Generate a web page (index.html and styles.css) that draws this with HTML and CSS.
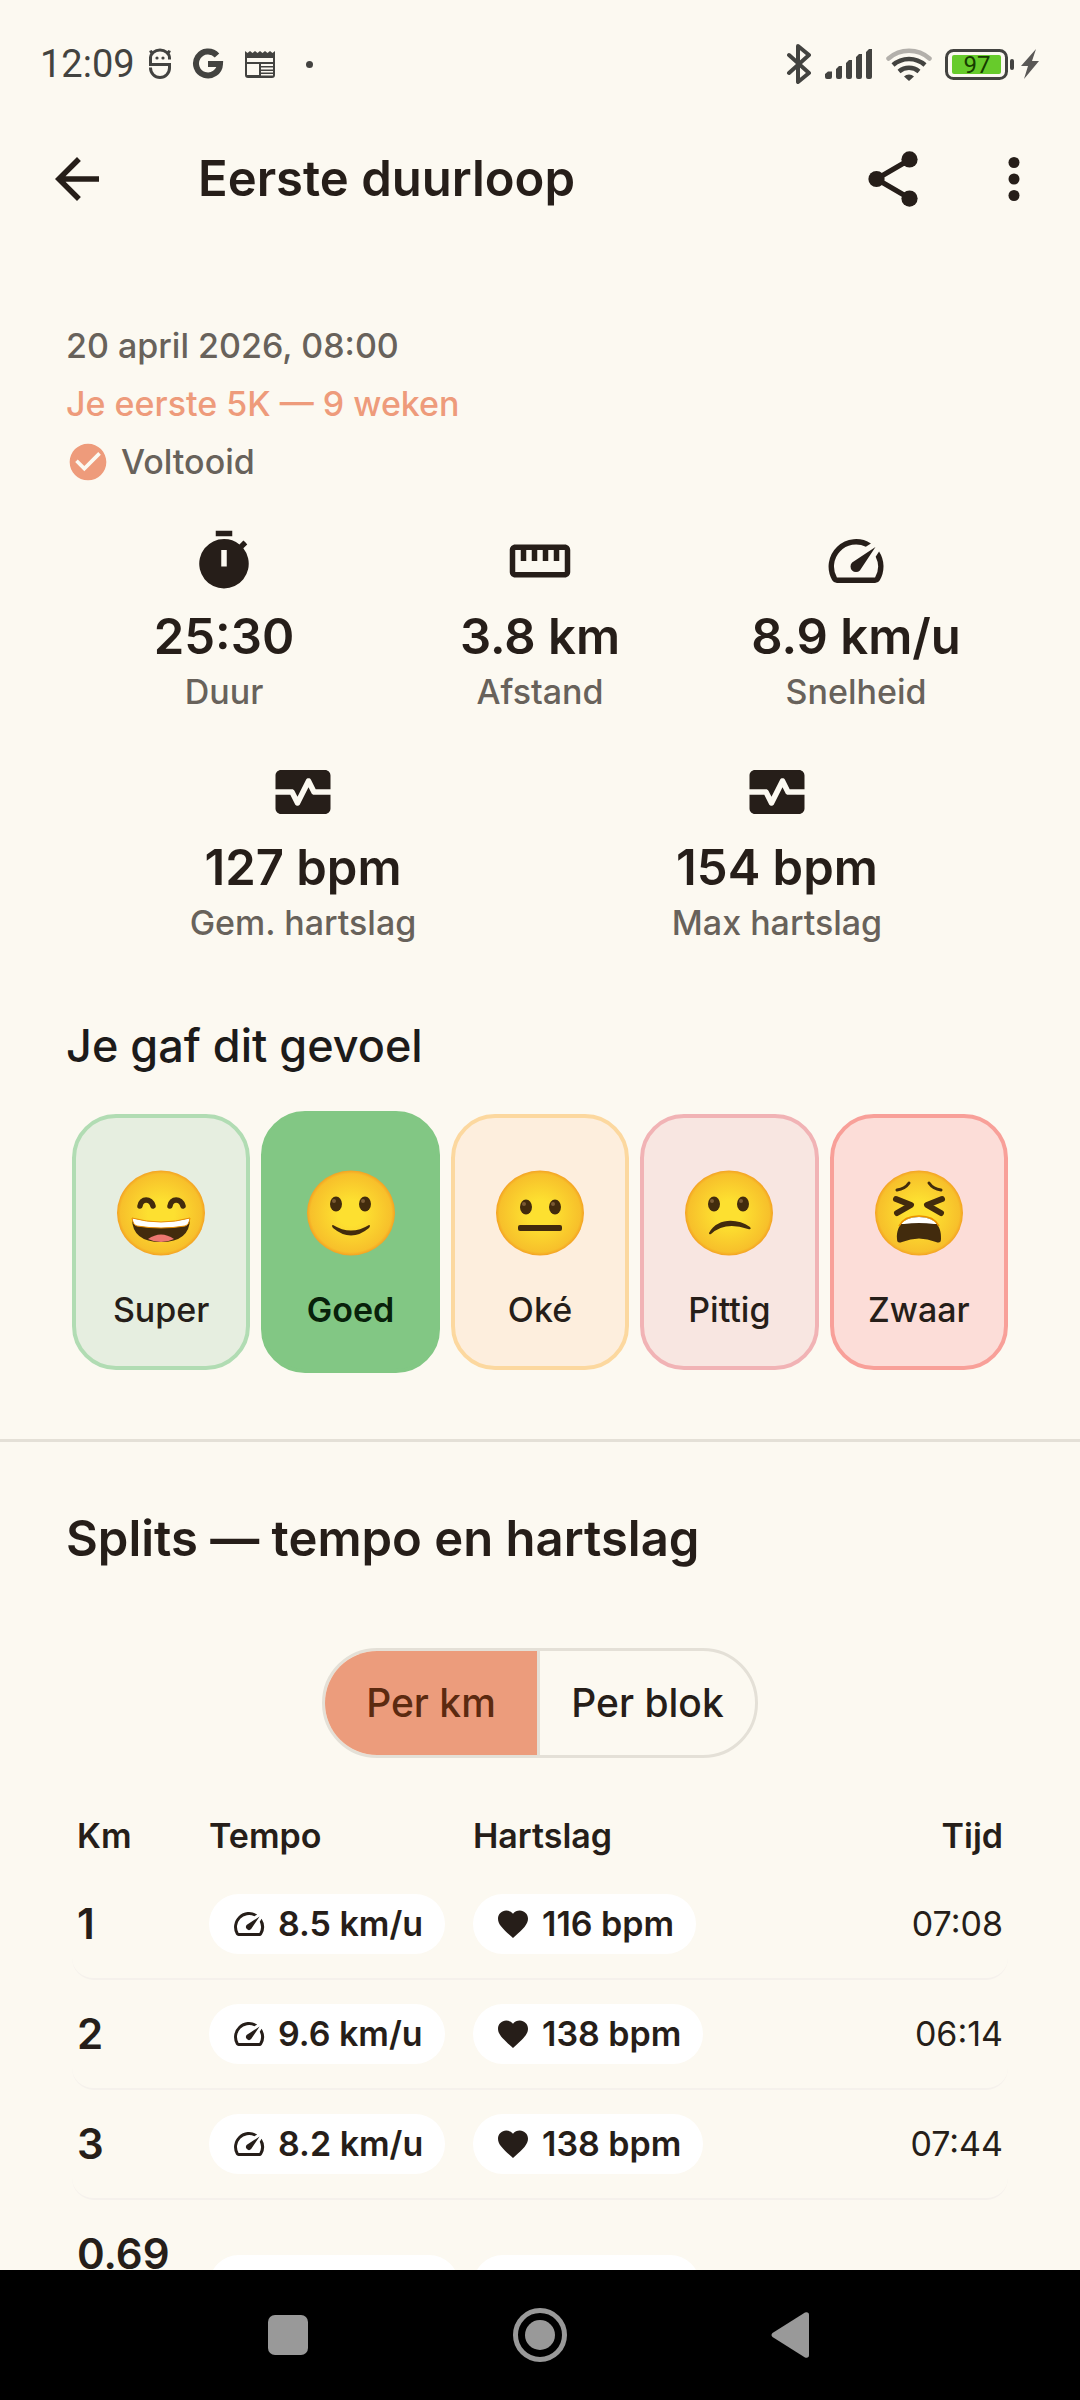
FILE: index.html
```html
<!DOCTYPE html>
<html lang="nl">
<head>
<meta charset="utf-8">
<meta name="viewport" content="width=device-width, initial-scale=1">
<title>Eerste duurloop</title>
<link rel="stylesheet" href="styles.css">
</head>
<body>
<svg class="defs" aria-hidden="true">
  <defs>
    <radialGradient id="face" cx="0.5" cy="0.5" r="0.5">
      <stop offset="0.3" stop-color="#fde030"/>
      <stop offset="0.92" stop-color="#f7c02b"/>
      <stop offset="1" stop-color="#f4a223"/>
    </radialGradient>
    <symbol id="gauge" viewBox="0 0 24 24">
      <path d="M20.38 8.57l-1.23 1.85a8 8 0 0 1-.22 7.58H5.07A8 8 0 0 1 15.58 6.85l1.85-1.23A10 10 0 0 0 3.35 19a2 2 0 0 0 1.72 1h13.85a2 2 0 0 0 1.74-1 10 10 0 0 0-.27-10.44z"/>
      <path d="M10.59 15.41a2 2 0 0 0 2.83 0l5.66-8.49-8.49 5.66a2 2 0 0 0 0 2.83z"/>
    </symbol>
    <symbol id="heart" viewBox="0 0 24 24">
      <path d="M12 21.35l-1.45-1.32C5.4 15.36 2 12.28 2 8.5 2 5.42 4.42 3 7.5 3c1.74 0 3.41.81 4.5 2.09C13.09 3.81 14.76 3 16.5 3 19.58 3 22 5.42 22 8.5c0 3.78-3.4 6.86-8.55 11.54z"/>
    </symbol>
    <symbol id="monitor" viewBox="0 0 24 24">
      <path d="M15.11 12.45 14 10.24l-3.11 6.21c-.16.34-.51.55-.89.55s-.73-.21-.89-.55L7.38 13H2v5c0 1.100.9 2 2 2h16c1.100 0 2-.9 2-2v-5h-6c-.38 0-.73-.21-.89-.55z"/>
      <path d="M20 4H4c-1.100 0-2 .9-2 2v5h6c.38 0 .73.210.89.550L10 13.760l3.110-6.210c.340-.680 1.450-.680 1.790 0L16.620 11H22V6c0-1.100-.9-2-2-2z"/>
    </symbol>
  </defs>
</svg>

<div class="status-bar">
  <div class="status-left">
    <span class="clock">12:09</span>
    <div class="notifications">
      <svg width="24" height="32" viewBox="0 0 24 32" fill="none" stroke="#434340" stroke-width="3">
        <path d="M2.500 11.500V10a9.500 8 0 0 1 19 0v1.500M2.500 9v7.500h19V20a9.500 9.500 0 0 1-19 0v-.5M4 6L2.500 2.500M20 6l1.500-3.500"/>
        <circle cx="9" cy="10" r="1.600" fill="#434340" stroke="none"/>
        <circle cx="15" cy="10" r="1.600" fill="#434340" stroke="none"/>
      </svg>
      <svg width="32" height="32" viewBox="0 0 32 32" fill="none" stroke="#434340" stroke-width="6">
        <path d="M25 7.500A12 12 0 1 0 28 16H16"/>
      </svg>
      <svg width="32" height="32" viewBox="0 0 32 32" fill="#434340">
        <path fill-rule="evenodd" d="M1 3l2.500 2L6 3l2.500 2L11 3l2.500 2L16 3l2.500 2L21 3l2.500 2L26 3l2.500 2L31 3v24a3 3 0 0 1-3 3H4a3 3 0 0 1-3-3zM3 10v4h26v-4zM3 16v11h12V16zM17 16v2h12v-2zM17 19.500v2h12v-2zM17 23v1.500h12V23zM17 26v1.500h12V26z"/>
      </svg>
      <span class="status-dot"></span>
    </div>
  </div>
  <div class="status-right">
    <svg width="26" height="40" viewBox="0 0 26 40" fill="none" stroke="#434340" stroke-width="4" stroke-linecap="round" stroke-linejoin="round">
      <path d="M3 11l20 18-11 9V2l11 9L3 29"/>
    </svg>
    <svg width="48" height="32" viewBox="0 0 48 32" fill="#434340">
      <path d="M0 26l3-2.500h4V29a2 2 0 0 1-2 2H2a2 2 0 0 1-2-2zM11 21l3-3h3v11a2 2 0 0 1-2 2h-2a2 2 0 0 1-2-2zM21 15l3-3h3v17a2 2 0 0 1-2 2h-2a2 2 0 0 1-2-2zM31 9l3-3h3v23a2 2 0 0 1-2 2h-2a2 2 0 0 1-2-2zM41 4l3-3h3v28a2 2 0 0 1-2 2h-2a2 2 0 0 1-2-2z"/>
    </svg>
    <svg width="46" height="36" viewBox="0 0 46 36" fill="none" stroke="#434340" stroke-width="4.500">
      <path stroke="#b3b0ab" stroke-linecap="round" d="M2.500 12.500a31 31 0 0 1 41 0"/>
      <path d="M7 19a24 24 0 0 1 32 0M13 25.500a15.500 15.500 0 0 1 20 0"/>
      <path stroke="none" fill="#434340" d="M18 30.500a7 7 0 0 1 10 0L23 35z"/>
    </svg>
    <div class="power">
      <svg width="70" height="32" viewBox="0 0 70 32">
        <rect x="1.500" y="2.500" width="60" height="28" rx="7" fill="none" stroke="#434340" stroke-width="3"/>
        <rect x="7" y="7" width="49" height="19" rx="2" fill="#67cb2b"/>
        <rect x="65" y="11" width="4" height="11" rx="2" fill="#434340"/>
        <text class="battery-text" x="32" y="25" text-anchor="middle">97</text>
      </svg>
      <svg width="20" height="32" viewBox="0 0 20 32" fill="#5a5856"><path d="M16 1L1 18h7L4 31l15-18h-7z"/></svg>
    </div>
  </div>
</div>

<header class="app-bar">
  <button class="icon-button" type="button" aria-label="Terug">
    <svg class="icon" viewBox="0 0 24 24"><path d="M20 11H7.830l5.590-5.590L12 4l-8 8 8 8 1.410-1.410L7.830 13H20z"/></svg>
  </button>
  <h1 class="title">Eerste duurloop</h1>
  <button class="icon-button" type="button" aria-label="Delen">
    <svg class="icon" viewBox="0 0 24 24"><path d="M18 5L6 12l12 7" fill="none" stroke="#261e19" stroke-width="1.900"/><circle cx="18" cy="4.900" r="2.950"/><circle cx="6" cy="12" r="2.950"/><circle cx="18" cy="19.100" r="2.950"/></svg>
  </button>
  <button class="icon-button" type="button" aria-label="Meer">
    <svg class="icon" viewBox="0 0 24 24"><circle cx="12" cy="6" r="2"/><circle cx="12" cy="12" r="2"/><circle cx="12" cy="18" r="2"/></svg>
  </button>
</header>

<main class="content">
  <section class="summary">
    <div class="meta">
      <p class="muted">20 april 2026, 08:00</p>
      <p class="plan">Je eerste 5K — 9 weken</p>
      <p class="muted done">
        <svg class="done-icon" viewBox="0 0 24 24"><path d="M12 2C6.480 2 2 6.480 2 12s4.480 10 10 10 10-4.480 10-10S17.520 2 12 2zm-2 15l-5-5 1.410-1.410L10 14.170l7.590-7.590L19 8l-9 9z"/></svg>
        Voltooid
      </p>
    </div>

    <div class="stats">
      <div class="stat-row">
        <div class="stat">
          <svg class="icon" viewBox="0 0 24 24"><path d="M9 1h6v2H9zM19.030 7.390l1.420-1.420c-.430-.510-.9-.990-1.410-1.410l-1.420 1.420A8.960 8.960 0 0 0 12 4a9 9 0 1 0 7.030 3.390zM13 14h-2V8h2z"/></svg>
          <p class="value">25:30</p>
          <p class="muted">Duur</p>
        </div>
        <div class="stat">
          <svg class="icon" viewBox="0 0 24 24"><path d="M21 6H3c-1.100 0-2 .9-2 2v8c0 1.100.9 2 2 2h18c1.100 0 2-.9 2-2V8c0-1.100-.9-2-2-2zm0 10H3V8h2v4h2V8h2v4h2V8h2v4h2V8h2v4h2V8h2v8z"/></svg>
          <p class="value">3.8 km</p>
          <p class="muted">Afstand</p>
        </div>
        <div class="stat">
          <svg class="icon"><use href="#gauge"/></svg>
          <p class="value">8.9 km/u</p>
          <p class="muted">Snelheid</p>
        </div>
      </div>
      <div class="stat-row">
        <div class="stat">
          <svg class="icon"><use href="#monitor"/></svg>
          <p class="value">127 bpm</p>
          <p class="muted">Gem. hartslag</p>
        </div>
        <div class="stat">
          <svg class="icon"><use href="#monitor"/></svg>
          <p class="value">154 bpm</p>
          <p class="muted">Max hartslag</p>
        </div>
      </div>
    </div>

    <h2 class="feeling-title">Je gaf dit gevoel</h2>
    <div class="feelings">
      <button class="feeling super" type="button">
        <svg class="emoji" viewBox="0 0 88 86">
          <ellipse cx="44" cy="43" rx="44" ry="42.500" fill="url(#face)"/>
          <g fill="none" stroke="#422b0d" stroke-width="5.500" stroke-linecap="round"><path d="M23 36c1-8 11-8 13 0M53 36c1-8 11-8 13 0"/></g>
          <path d="M15 48q29 8 58 0 0 24-29 24T15 48z" fill="#422b0d"/>
          <path d="M31 69q13-9 26 0-6 3-13 3t-13-3z" fill="#ed7770"/>
          <path d="M15 48q29 8 58 0-1 7-5 8-24 4-48 0-4-1-5-8z" fill="#fff" stroke="#eb8f00" stroke-width="1"/>
        </svg>
        <span>Super</span>
      </button>
      <button class="feeling good" type="button" aria-pressed="true">
        <svg class="emoji" viewBox="0 0 88 86">
          <ellipse cx="44" cy="43" rx="44" ry="42.500" fill="url(#face)"/>
          <g fill="#422b0d"><ellipse cx="29" cy="34" rx="6" ry="7.500"/><ellipse cx="58" cy="34" rx="6" ry="7.500"/><path d="M26 55q18 11 36 0 2 0 0 3-18 15-36 0-2-3 0-3z"/></g>
          <g fill="#7a5a35"><circle cx="27" cy="31" r="2"/><circle cx="56" cy="31" r="2"/></g>
        </svg>
        <span>Goed</span>
      </button>
      <button class="feeling okay" type="button">
        <svg class="emoji" viewBox="0 0 88 86">
          <ellipse cx="44" cy="43" rx="44" ry="42.500" fill="url(#face)"/>
          <g fill="#422b0d"><ellipse cx="30" cy="37" rx="6" ry="7.500"/><ellipse cx="59" cy="37" rx="6" ry="7.500"/><rect x="22" y="55" width="44" height="6" rx="2"/></g>
          <g fill="#7a5a35"><circle cx="28" cy="34" r="2"/><circle cx="57" cy="34" r="2"/></g>
        </svg>
        <span>Oké</span>
      </button>
      <button class="feeling tough" type="button">
        <svg class="emoji" viewBox="0 0 88 86">
          <ellipse cx="44" cy="43" rx="44" ry="42.500" fill="url(#face)"/>
          <g fill="#422b0d"><ellipse cx="29" cy="34" rx="6" ry="7.500"/><ellipse cx="58" cy="34" rx="6" ry="7.500"/><path d="M24 63C32 48 52 48 65 57q2 3-2 2-23-8-37 5-2 1-2-1z"/></g>
          <g fill="#7a5a35"><circle cx="27" cy="31" r="2"/><circle cx="56" cy="31" r="2"/></g>
        </svg>
        <span>Pittig</span>
      </button>
      <button class="feeling heavy" type="button">
        <svg class="emoji" viewBox="0 0 88 86">
          <ellipse cx="44" cy="43" rx="44" ry="42.500" fill="url(#face)"/>
          <g fill="none" stroke="#422b0d" stroke-linecap="round" stroke-linejoin="round">
            <path stroke-width="3" d="M22 20q8-1 12-7M66 20q-8-1-12-7"/>
            <path stroke-width="6" d="M21 29l15 6-14 8M67 29l-15 6 14 8"/>
          </g>
          <path d="M22 69C21 54 31 47 44 47s23 7 22 22q0 5-5 3-17-7-34 0-5 2-5-3z" fill="#422b0d"/>
          <path d="M26 54q6-7 18-7t18 7l-3 0q-15-2-30 0z" fill="#fff"/>
          <path d="M24 56q5-10 20-10t20 10" fill="none" stroke="#eb8f00" stroke-width="1.500"/>
        </svg>
        <span>Zwaar</span>
      </button>
    </div>
  </section>

  <section class="splits">
    <h2 class="splits-title">Splits — tempo en hartslag</h2>
    <div class="segments">
      <button class="segment selected" type="button" aria-pressed="true">Per km</button>
      <button class="segment" type="button" aria-pressed="false">Per blok</button>
    </div>
    <table class="table">
      <thead>
        <tr><th class="col-km" scope="col">Km</th><th class="col-pace" scope="col">Tempo</th><th scope="col">Hartslag</th><th class="time" scope="col">Tijd</th></tr>
      </thead>
      <tbody>
        <tr>
          <td class="km">1</td>
          <td><span class="chip"><svg class="chip-icon"><use href="#gauge"/></svg>8.5 km/u</span></td>
          <td><span class="chip"><svg class="chip-icon"><use href="#heart"/></svg>116 bpm</span></td>
          <td class="time">07:08</td>
        </tr>
        <tr>
          <td class="km">2</td>
          <td><span class="chip"><svg class="chip-icon"><use href="#gauge"/></svg>9.6 km/u</span></td>
          <td><span class="chip"><svg class="chip-icon"><use href="#heart"/></svg>138 bpm</span></td>
          <td class="time">06:14</td>
        </tr>
        <tr>
          <td class="km">3</td>
          <td><span class="chip"><svg class="chip-icon"><use href="#gauge"/></svg>8.2 km/u</span></td>
          <td><span class="chip"><svg class="chip-icon"><use href="#heart"/></svg>138 bpm</span></td>
          <td class="time">07:44</td>
        </tr>
        <tr class="tall">
          <td class="km">0.69</td>
          <td><span class="chip chip-wide"></span></td>
          <td><span class="chip chip-narrow"></span></td>
          <td class="time"></td>
        </tr>
      </tbody>
    </table>
  </section>
</main>

<nav class="nav-bar" aria-label="Systeem">
  <button class="nav-button" type="button" aria-label="Recente apps"><svg viewBox="0 0 54 54"><rect x="7" y="7" width="40" height="40" rx="7"/></svg></button>
  <button class="nav-button" type="button" aria-label="Start"><svg viewBox="0 0 54 54"><circle cx="27" cy="27" r="15"/><circle cx="27" cy="27" r="24.500" fill="none" stroke="#999" stroke-width="5"/></svg></button>
  <button class="nav-button" type="button" aria-label="Vorige"><svg viewBox="0 0 54 54"><path d="M7.500 25L40 4.500q4-1 4 2.500v40q0 3.500-4 2.500L7.500 29q-2-2 0-4z"/></svg></button>
</nav>
</body>
</html>
```
FILE: styles.css
```css
* {
  box-sizing: border-box;
}

body {
  margin: 0;
  height: 100vh;
  display: flex;
  flex-direction: column;
  overflow: hidden;
  background: #fcf9f1;
  color: #261e19;
  font-family: Inter, "Liberation Sans", sans-serif;
  font-optical-sizing: none;
  font-size: 34px;
  line-height: 44px;
}

h1,
h2,
p {
  margin: 0;
}

button {
  margin: 0;
  padding: 0;
  border: 0;
  background: none;
  color: inherit;
  font: inherit;
}

svg {
  display: block;
  flex: none;
}

.defs {
  position: absolute;
  width: 0;
  height: 0;
}

.icon {
  width: 66px;
  height: 66px;
  fill: #261e19;
}

/* System status bar */
.status-bar {
  flex: none;
  display: flex;
  justify-content: space-between;
  height: 102px;
  padding: 28px 40px 0;
}

.status-left,
.status-right,
.notifications,
.power {
  display: flex;
  align-items: center;
}

.status-left,
.status-right {
  gap: 13px;
  height: 72px;
}

.notifications {
  gap: 20px;
}

.power {
  gap: 5px;
}

.clock {
  color: #434340;
  font-family: Roboto, sans-serif;
  font-size: 38px;
}

.status-dot {
  width: 7px;
  height: 7px;
  margin-left: 10px;
  border-radius: 50%;
  background: #434340;
}

.battery-text {
  fill: #173d00;
  font-family: Roboto, sans-serif;
  font-size: 24px;
}

/* App bar */
.app-bar {
  flex: none;
  display: flex;
  align-items: center;
  gap: 55px;
  height: 154px;
  padding: 0 33px 0 44px;
}

.title {
  flex: 1;
  margin-left: 33px;
}

.title,
.value,
.splits-title {
  font-size: 49px;
  font-weight: 600;
  line-height: 66px;
}

/* Summary */
.content {
  flex: 1;
  min-height: 0;
  overflow: hidden;
}

.summary {
  padding: 68px 66px 66px;
  border-bottom: 3px solid #e4e0d7;
}

.meta {
  display: grid;
  gap: 14px;
}

.muted {
  color: #68625b;
  font-weight: 500;
}

.plan {
  color: #ee9b7b;
  font-weight: 500;
}

.done {
  display: flex;
  gap: 11px;
}

.done-icon {
  width: 44px;
  height: 44px;
  fill: #ee9b7b;
}

.stats {
  display: grid;
  gap: 45px;
  margin-top: 44px;
}

.stat-row {
  display: flex;
}

.stat {
  flex: 1;
  display: flex;
  flex-direction: column;
  align-items: center;
}

.value {
  margin-top: 10px;
}

.feeling-title {
  margin-top: 68px;
  color: #1d1b1a;
  font-size: 45px;
  font-weight: 500;
  line-height: 66px;
}

.feelings {
  display: grid;
  grid-template-columns: repeat(5, 1fr);
  align-items: center;
  gap: 11px;
  margin-top: 32px;
  padding: 0 6px;
}

.feeling {
  display: flex;
  flex-direction: column;
  align-items: center;
  justify-content: center;
  gap: 32px;
  height: 256px;
  padding-top: 18px;
  border: 4px solid;
  border-radius: 44px;
  font-weight: 500;
}

.feeling span {
  color: #261e19;
}

.emoji {
  width: 88px;
  height: 86px;
}

.super {
  background: #e6eee0;
  border-color: #b1dcb3;
}

.good {
  height: 262px;
  background: #82c784;
  border-color: #82c784;
  font-weight: 600;
}

.good span {
  color: #08210a;
}

.okay {
  background: #fdeedd;
  border-color: #fcd89f;
}

.tough {
  background: #f8e6e1;
  border-color: #f1b3b5;
}

.heavy {
  background: #fcddd8;
  border-color: #f8a099;
}

/* Splits */
.splits {
  padding: 64px 72px 0;
}

.splits-title {
  margin-left: -6px;
}

.segments {
  display: grid;
  grid-template-columns: 1fr 1fr;
  width: 436px;
  height: 110px;
  margin: 76px auto 56px;
  overflow: hidden;
  border: 3px solid #e4e0d7;
  border-radius: 55px;
}

.segment {
  font-size: 39px;
  font-weight: 500;
}

.selected {
  border-right: 3px solid #e4e0d7;
  background: #ec9c7c;
  color: #5c2a10;
}

.table {
  width: 100%;
  border-collapse: separate;
  border-spacing: 0;
  table-layout: fixed;
}

.col-km {
  width: 137px;
}

.col-pace {
  width: 264px;
}

th {
  padding: 0 0 12px;
  font-weight: 600;
  text-align: left;
}

td {
  height: 110px;
  padding: 0;
  border-bottom: 2px solid #f5f1ec;
}

th:first-child,
td:first-child {
  padding-left: 5px;
}

td:first-child {
  border-bottom-left-radius: 22px;
}

td:last-child {
  border-bottom-right-radius: 22px;
}

.km {
  font-size: 42px;
  font-weight: 600;
}

.time {
  padding-right: 5px;
  text-align: right;
}

.chip {
  display: flex;
  align-items: center;
  gap: 11px;
  width: fit-content;
  height: 60px;
  padding: 0 22px;
  border-radius: 30px;
  background: #fff;
  font-weight: 600;
  white-space: nowrap;
}

.chip-icon {
  width: 36px;
  height: 36px;
  fill: #261e19;
}

.tall td {
  height: 172px;
}

.tall .km {
  padding-top: 38px;
  line-height: 32px;
  vertical-align: top;
}

.chip-wide {
  width: 250px;
}

.chip-narrow {
  width: 227px;
}

/* System navigation bar */
.nav-bar {
  flex: none;
  display: flex;
  align-items: center;
  justify-content: center;
  gap: 198px;
  height: 130px;
  background: #000;
}

.nav-button svg {
  width: 54px;
  height: 54px;
  fill: #999;
}
```
